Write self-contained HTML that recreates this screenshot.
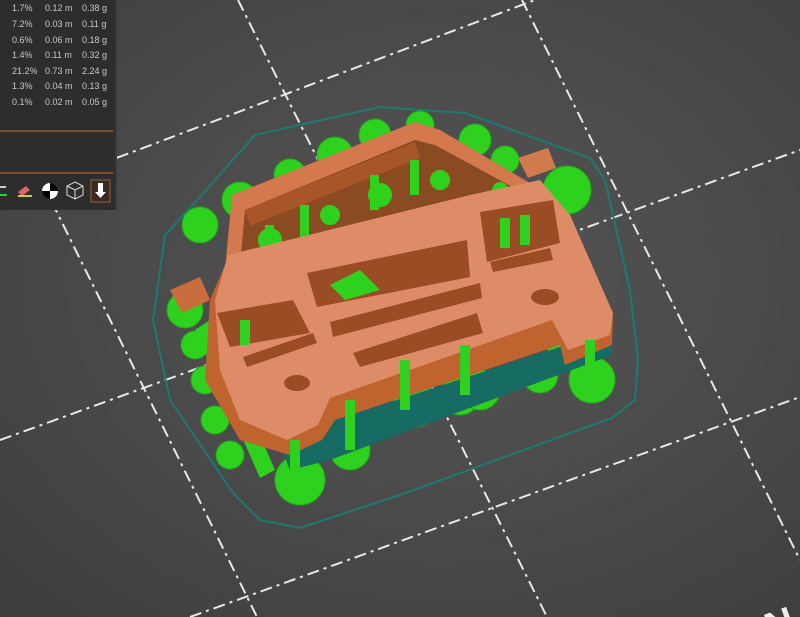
<!DOCTYPE html>
<html><head><style>
html,body{margin:0;padding:0;width:800px;height:617px;overflow:hidden;background:#474747;font-family:"Liberation Sans",sans-serif}
#bg{position:absolute;left:0;top:0;width:800px;height:617px;background:radial-gradient(ellipse at 55% 45%,#555 0%,#4a4a4a 50%,#3d3d3d 100%)}
#panel{position:absolute;left:0;top:0;width:115px;height:210px;background:#2d2d2d;border-right:2px solid #3a3a3a;color:#c8c8c8;font-size:9px}
.r{position:absolute;left:12px;white-space:nowrap}
.r span{position:absolute}
.ln{position:absolute;left:0;width:113px;height:2px;background:#7a4f33}
</style></head><body>
<div id="bg"></div>
<svg width="800" height="617" style="position:absolute;left:0;top:0;overflow:hidden">
<g stroke="#e8e8e8" stroke-width="2" stroke-dasharray="12 5 3 5" fill="none">
<line x1="0" y1="202" x2="535" y2="0"/>
<line x1="0" y1="440" x2="800" y2="150"/>
<line x1="190" y1="617" x2="800" y2="397"/>
<line x1="522" y1="0" x2="800" y2="560"/>
<line x1="238" y1="0" x2="547" y2="617"/>
<line x1="-48" y1="0" x2="257" y2="617"/>
</g>
<path d="M200,197 L255,135 L380,107 L465,113 L590,158 L605,180 L630,290 L638,360 L635,400 L612,418 L400,495 L300,528 L260,520 L233,493 L170,400 L153,320 L165,235 Z" fill="none" stroke="#1d7a70" stroke-width="2"/>
<g fill="#2fd11f" stroke="#23a818" stroke-width="1">
<circle cx="240" cy="200" r="18"/><circle cx="290" cy="175" r="16"/><circle cx="335" cy="155" r="18"/><circle cx="375" cy="135" r="16"/><circle cx="420" cy="125" r="14"/><circle cx="475" cy="140" r="16"/><circle cx="505" cy="160" r="14"/><circle cx="567" cy="190" r="24"/>
<circle cx="200" cy="225" r="18"/><circle cx="185" cy="310" r="18"/><circle cx="195" cy="345" r="14"/><circle cx="205" cy="380" r="14"/><circle cx="215" cy="420" r="14"/><circle cx="230" cy="455" r="14"/>
<circle cx="300" cy="480" r="25"/><circle cx="350" cy="450" r="20"/><circle cx="415" cy="405" r="22"/><circle cx="460" cy="395" r="20"/><circle cx="480" cy="390" r="20"/><circle cx="540" cy="375" r="18"/><circle cx="592" cy="380" r="23"/><circle cx="560" cy="340" r="16"/>
</g>
<path d="M195,330 L210,320 L275,470 L260,478 Z" fill="#2fd11f"/>
<path d="M290,470 L330,460 L612,355 L612,330 L320,425 L280,445 Z" fill="#166b62"/>
<path d="M225,270 L232,195 L415,122 L440,130 L550,195 L470,200 Z" fill="#8a4a22"/>
<g fill="#2fd11f"><circle cx="270" cy="240" r="12"/><circle cx="330" cy="215" r="10"/><circle cx="380" cy="195" r="12"/><circle cx="440" cy="180" r="10"/><circle cx="500" cy="190" r="8"/></g>
<path d="M225,270 L232,195 L415,122 L440,130 L550,195 L540,202 L435,145 L415,140 L245,210 L240,265 Z" fill="#d4794e"/>
<path d="M245,210 L415,142 L420,158 L250,226 Z" fill="#a8552a"/>
<g fill="#2fd11f"><rect x="300" y="205" width="9" height="35"/><rect x="370" y="175" width="9" height="35"/><rect x="410" y="160" width="9" height="35"/><rect x="265" y="225" width="9" height="35"/></g>
<path d="M210,300 L228,258 L540,188 L613,318 L612,345 L565,365 L560,345 L335,420 L322,440 L290,455 L240,440 L205,380 Z" fill="#c0642f"/>
<path d="M215,300 L228,255 L470,195 L540,180 L570,215 L613,313 L610,335 L568,350 L552,320 L330,398 L318,425 L287,440 L240,420 L220,370 Z" fill="#de8c67"/>
<g fill="#9a4c24">
<path d="M307,273 L467,240 L470,277 L317,307 Z"/>
<path d="M480,212 L553,200 L560,243 L487,262 Z"/>
<path d="M217,313 L293,300 L310,333 L230,347 Z"/>
<path d="M330,322 L480,283 L482,298 L333,337 Z"/>
<path d="M353,353 L477,313 L483,333 L360,367 Z"/>
<path d="M243,357 L313,333 L317,343 L247,367 Z"/>
<path d="M490,262 L550,248 L553,260 L493,272 Z"/>
<ellipse cx="545" cy="297" rx="14" ry="8"/>
<ellipse cx="297" cy="383" rx="13" ry="8"/>
</g>
<g fill="#2fd11f"><path d="M330,285 L360,270 L380,290 L345,300 Z"/><rect x="500" y="218" width="10" height="30"/><rect x="520" y="215" width="10" height="30"/><rect x="240" y="320" width="10" height="25"/><rect x="400" y="360" width="10" height="50"/><rect x="460" y="345" width="10" height="50"/><rect x="585" y="340" width="10" height="35"/><rect x="290" y="440" width="10" height="40"/><rect x="345" y="400" width="10" height="50"/></g>
<path d="M170,290 L200,277 L210,300 L182,313 Z" fill="#c86d3d"/>
<path d="M518,158 L548,148 L556,168 L528,178 Z" fill="#d07a4e"/>
<text x="760" y="640" fill="#eee" font-size="40" font-family="Liberation Sans" font-weight="bold" transform="rotate(-20 770 610)">N</text>
</svg>
<div id="panel">
<div class="r" style="top:3px"><span>1.7%</span><span style="left:33px">0.12 m</span><span style="left:70px">0.38 g</span></div>
<div class="r" style="top:19px"><span>7.2%</span><span style="left:33px">0.03 m</span><span style="left:70px">0.11 g</span></div>
<div class="r" style="top:35px"><span>0.6%</span><span style="left:33px">0.06 m</span><span style="left:70px">0.18 g</span></div>
<div class="r" style="top:50px"><span>1.4%</span><span style="left:33px">0.11 m</span><span style="left:70px">0.32 g</span></div>
<div class="r" style="top:66px"><span>21.2%</span><span style="left:33px">0.73 m</span><span style="left:70px">2.24 g</span></div>
<div class="r" style="top:81px"><span>1.3%</span><span style="left:33px">0.04 m</span><span style="left:70px">0.13 g</span></div>
<div class="r" style="top:97px"><span>0.1%</span><span style="left:33px">0.02 m</span><span style="left:70px">0.05 g</span></div>
<div class="ln" style="top:130px"></div>
<div class="ln" style="top:172px"></div>
<svg width="115" height="30" style="position:absolute;left:0;top:178px">
<rect x="0" y="8" width="6" height="2" fill="#ccc"/><rect x="0" y="16" width="7" height="2" fill="#3c3"/>
<path d="M18,14 l8,-6 l4,4 l-8,6z" fill="#d66"/><rect x="18" y="17" width="14" height="2" fill="#cc4"/>
<circle cx="50" cy="13" r="8" fill="#fff"/><path d="M50,5 A8,8 0 0 1 58,13 L50,13Z M50,21 A8,8 0 0 1 42,13 L50,13Z" fill="#000"/>
<path d="M75,4 l8,4 v9 l-8,4 l-8,-4 v-9z M67,8 l8,4 l8,-4 M75,12 v9" fill="none" stroke="#ddd" stroke-width="1"/>
<rect x="91" y="2" width="19" height="22" fill="#3a2a22" stroke="#9a6040"/><path d="M98,5 h5 v9 h3 l-5.5,6 l-5.5,-6 h3z" fill="#fff"/>
</svg>
</div>
</body></html>
